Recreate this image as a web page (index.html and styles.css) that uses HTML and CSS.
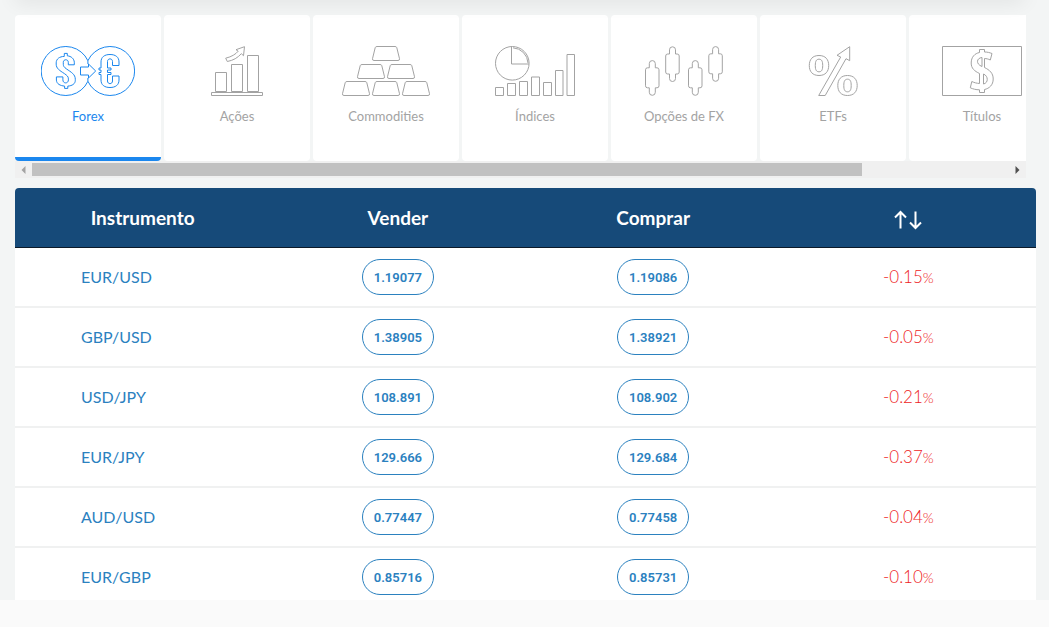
FILE: index.html
```html
<!DOCTYPE html>
<html lang="pt">
<head>
<meta charset="utf-8">
<title>Instrumentos</title>
<meta name="viewport" content="width=device-width, initial-scale=1">
<link rel="stylesheet" href="styles.css">
</head>
<body>
<main class="market">
  <div class="scroller">
    <nav class="tabs" aria-label="Mercados">
      <a class="tab tab-active" href="#forex">
        <svg class="tab-icon" width="94" height="50" viewBox="0 0 94 50" aria-hidden="true">
          <path d="M46.9 18V14.7A24.5 24.5 0 1 0 46.9 35.3V32M46.9 14.7A24.5 24.5 0 1 1 46.9 35.3"/>
          <path d="M39.5 21h8v-3l7.2 7-7.2 7v-3h-8z"/>
          <path d="M23.3 9.8V7.4h3v2.4c4 .4 6.8 3 7 6.4v2.6h-6v-2.5c0-3.4-5-3.4-5 0v2c0 2 1 3 3 4.5 5 3.5 9 5.5 9 10.500v1c0 3.500-3 5.500-7.500 5.800v2.300h-3.200v-2.300c-4.500-.4-8-2.200-8.200-6v-3.200h6.500v3c0 4 5.500 4 5.500 0v-1c0-2.500-1.500-3.500-4-5.300-4.800-3.200-8.200-5-8.200-9.500v-1.200c0-4 3.300-6.400 8.100-6.500z"/>
          <path d="M78 19.500h-6.500v-4c0-3.500-5-3.500-5 0v6.500h3.500v2h-3.500v2.500h3.500v2h-3.500v6.500c0 3.500 5 3.500 5 0v-5H78v4c0 5-3.500 7.500-9 7.500s-9-2.500-9-7.500v-5.500h-2v-2h2V24h-2v-2h2v-6c0-5 3.500-7.500 9-7.500s9 2.500 9 7.500z"/>
        </svg>
        <span>Forex</span>
      </a>
      <a class="tab" href="#acoes">
        <svg class="tab-icon" width="52" height="50" viewBox="0 0 52 50" aria-hidden="true">
          <path d="M4.500 26.500h11v19h-11zM20.500 18.500h11v27h-11zM36.500 9.500h11v36h-11zM.5 46.500h51v3H.5z"/>
          <path d="M14.700 12.200c6-1.500 10-4 12.500-7l-2.200-1.500 8.500-3-1 9-2.200-2c-3.500 4-8 6.700-14 7.800z"/>
        </svg>
        <span>Ações</span>
      </a>
      <a class="tab" href="#commodities">
        <svg class="tab-icon" width="88" height="50" viewBox="0 0 88 50" aria-hidden="true">
          <defs><path id="ingot" d="M4.500 0h18q1.500 0 1.800 1.200l2.700 11q.3 1.800-1.500 1.800h-24q-1.800 0-1.500-1.800l2.700-11Q3 0 4.500 0z"/></defs>
          <use href="#ingot" x="30.500" y=".5"/>
          <use href="#ingot" x="15.500" y="18.500"/><use href="#ingot" x="45.500" y="18.500"/>
          <use href="#ingot" x=".5" y="35.500"/><use href="#ingot" x="30.500" y="35.500"/><use href="#ingot" x="60.500" y="35.500"/>
        </svg>
        <span>Commodities</span>
      </a>
      <a class="tab" href="#indices">
        <svg class="tab-icon" width="80" height="50" viewBox="0 0 80 50" aria-hidden="true">
          <circle cx="17.300" cy="17.300" r="16.800"/>
          <path d="M16.500 .5v17.500h17.500M18 1.800A16 16 0 0 1 33 17"/>
          <path d="M.5 41.500h8v8h-8zM12.500 37.500h8v12h-8zM24.500 35.500h8v14h-8zM36.500 31h8v18.500h-8zM48.500 36.500h8v13h-8zM60.500 24.500h7.500v25h-7.500zM72 8.500h7.500v41H72z"/>
        </svg>
        <span>Índices</span>
      </a>
      <a class="tab" href="#opcoes">
        <svg class="tab-icon" width="78" height="50" viewBox="0 0 78 50" aria-hidden="true">
          <defs><path id="candle" d="M3.800 7.500V3.300a3 3 0 0 1 6 0V7.500h1.700q2 0 2 2v16q0 2-2 2h-1.700v4.500a3 3 0 0 1-6 0v-4.500H2q-2 0-2-2v-16q0-2 2-2h1.800z"/></defs>
          <use href="#candle" x=".5" y="14.300"/><use href="#candle" x="20.700" y=".5"/>
          <use href="#candle" x="43.500" y="14.300"/><use href="#candle" x="63.800" y=".3"/>
        </svg>
        <span>Opções de FX</span>
      </a>
      <a class="tab" href="#etfs">
        <svg class="tab-icon" width="50" height="50" viewBox="0 0 50 50" aria-hidden="true">
          <path d="M11 9.500c6.500 0 9.700 4 9.700 10s-3.200 10-9.700 10-9.700-4-9.700-10 3.200-10 9.700-10zM11 13.200c-2.700 0-3.700 2-3.700 6.300s1 6.300 3.700 6.300 3.700-2 3.700-6.300-1-6.300-3.700-6.300z"/>
          <path d="M39.500 29.500c6.500 0 9.700 4 9.700 10s-3.200 10-9.700 10-9.700-4-9.700-10 3.200-10 9.700-10zM39.500 33.200c-2.700 0-3.700 2-3.700 6.300s1 6.300 3.700 6.300 3.700-2 3.700-6.300-1-6.300-3.700-6.300z"/>
          <path d="M10.700 49.500h6.500L38 12.700l3.700 2v-14L29 9.300l3.700 1.700z"/>
        </svg>
        <span>ETFs</span>
      </a>
      <a class="tab" href="#titulos">
        <svg class="tab-icon" width="80" height="50" viewBox="0 0 80 50" aria-hidden="true">
          <path d="M.5 .5h79v49H.5z"/>
          <path d="M37.500 6.500V3.500h5V6c3 0 5 .6 7.500 1.500l-1.700 6.500c-2-1-4-1.500-5.800-1.500v9c5 2.500 8.700 5.500 8.700 11.500s-4 9.500-8.700 10.500v3h-5v-2.700c-3.500 0-6.500-.8-9.200-2l1.500-6.300c2.500 1.200 5 1.800 7.700 2V27.500c-5-2.500-8.300-5-8.300-10.500 0-6 3.500-9.500 8.300-10.500z"/>
          <path d="M40 11.500c-5.500 .5-6.500 6.500 0 9zM41.500 28v10c5-1 5-8 0-10z"/>
        </svg>
        <span>Títulos</span>
      </a>
    </nav>
    <div class="scrollbar">
      <button class="scroll-arrow" type="button" aria-label="Anterior">
        <svg width="5" height="8" viewBox="0 0 5 8"><path fill="#a3a3a3" d="M4.500 0v8L.5 4z"/></svg>
      </button>
      <div class="scroll-track"><div class="scroll-thumb"></div></div>
      <button class="scroll-arrow" type="button" aria-label="Próximo">
        <svg width="5" height="8" viewBox="0 0 5 8"><path fill="#505050" d="M.5 0v8l4-4z"/></svg>
      </button>
    </div>
  </div>

  <table class="quotes">
    <thead>
      <tr>
        <th scope="col">Instrumento</th>
        <th scope="col">Vender</th>
        <th scope="col">Comprar</th>
        <th scope="col" aria-label="Variação">
          <svg class="sort-icon" width="28" height="20" viewBox="0 0 28 20" aria-hidden="true"><path d="M6.500 18.500V2M1 7.500 6.500 2 12 7.500M21.500 1.500V18M16 12.500l5.500 5.500 5.500-5.500"/></svg>
        </th>
      </tr>
    </thead>
    <tbody>
      <tr><td><a href="#eurusd">EUR/USD</a></td><td><button class="price" type="button">1.19077</button></td><td><button class="price" type="button">1.19086</button></td><td class="change">-0.15<small>%</small></td></tr>
      <tr><td><a href="#gbpusd">GBP/USD</a></td><td><button class="price" type="button">1.38905</button></td><td><button class="price" type="button">1.38921</button></td><td class="change">-0.05<small>%</small></td></tr>
      <tr><td><a href="#usdjpy">USD/JPY</a></td><td><button class="price" type="button">108.891</button></td><td><button class="price" type="button">108.902</button></td><td class="change">-0.21<small>%</small></td></tr>
      <tr><td><a href="#eurjpy">EUR/JPY</a></td><td><button class="price" type="button">129.666</button></td><td><button class="price" type="button">129.684</button></td><td class="change">-0.37<small>%</small></td></tr>
      <tr><td><a href="#audusd">AUD/USD</a></td><td><button class="price" type="button">0.77447</button></td><td><button class="price" type="button">0.77458</button></td><td class="change">-0.04<small>%</small></td></tr>
      <tr><td><a href="#eurgbp">EUR/GBP</a></td><td><button class="price" type="button">0.85716</button></td><td><button class="price" type="button">0.85731</button></td><td class="change">-0.10<small>%</small></td></tr>
    </tbody>
  </table>
</main>
<footer class="strip"></footer>
</body>
</html>
```

FILE: styles.css
```css
* {
  box-sizing: border-box;
}

body {
  margin: 0;
  height: 100vh;
  display: flex;
  flex-direction: column;
  background: #f3f5f5;
  font-family: Lato, "Open Sans", sans-serif;
}

.market {
  position: relative;
  flex: 1;
  min-height: 0;
  overflow: hidden;
  padding: 15px 13px 0 15px;
}

/* Shadow cast by the panel above */
.market::before {
  content: "";
  position: absolute;
  top: -10px;
  left: 15px;
  right: 25px;
  height: 10px;
  box-shadow: 0 0 20px rgba(0, 0, 0, 0.12);
}

.strip {
  flex: none;
  height: 27px;
  background: #fafafa;
}

.scroller {
  margin: 0 10px 10px 0;
}

.tabs {
  display: flex;
  gap: 3px;
  overflow: hidden;
}

.tab {
  flex: none;
  width: 146px;
  height: 146px;
  padding-top: 31px;
  display: flex;
  flex-direction: column;
  align-items: center;
  gap: 11px;
  border-radius: 4px;
  background: #fff;
  color: #a3a3a3;
  font-size: 13px;
  line-height: 18px;
  text-decoration: none;
}

.tab-active {
  border-bottom: 4px solid #1b87ee;
  color: #1b87ee;
}

.tab-icon {
  display: block;
  fill: none;
  stroke: currentColor;
  stroke-width: 1;
}

.scrollbar {
  display: flex;
  height: 17px;
  background: #f0f0f0;
}

.scroll-arrow {
  width: 17px;
  padding: 0;
  border: 0;
  background: none;
  display: flex;
  align-items: center;
  justify-content: center;
}

.scroll-track {
  flex: 1;
  padding: 2px 0;
}

.scroll-thumb {
  width: 85%;
  height: 13px;
  background: #c1c1c1;
}

.quotes {
  width: 100%;
  table-layout: fixed;
  border-collapse: separate;
  border-spacing: 0;
}

.quotes th {
  height: 60px;
  padding: 0;
  background: #164a79;
  border-bottom: 1px solid #0c1a28;
  color: #fff;
  font-size: 19px;
  font-weight: 700;
  line-height: 24px;
  text-align: center;
}

.quotes th:first-child {
  border-top-left-radius: 4px;
}

.quotes th:last-child {
  border-top-right-radius: 4px;
}

.sort-icon {
  display: block;
  margin: 4px auto 0;
  fill: none;
  stroke: #fff;
  stroke-width: 2;
}

.quotes td {
  height: 60px;
  padding: 0;
  background: #fff;
  border-bottom: 2px solid #f0f1f1;
  font-size: 16px;
  line-height: 20px;
  text-align: center;
}

.quotes td:first-child {
  padding-left: 66px;
  text-align: left;
}

.quotes a {
  color: #2b81bf;
  text-decoration: none;
}

.price {
  display: block;
  width: 72px;
  height: 36px;
  margin: 0 auto;
  padding: 2px 0 0;
  border: 1px solid #2b81bf;
  border-radius: 18px;
  background: #fff;
  color: #2b81bf;
  font: 600 13px/16px Roboto, "Open Sans", sans-serif;
}

.quotes .change {
  color: #ee1c24;
  font-size: 17px;
  font-weight: 300;
}

.change small {
  font-size: 14px;
}
```
